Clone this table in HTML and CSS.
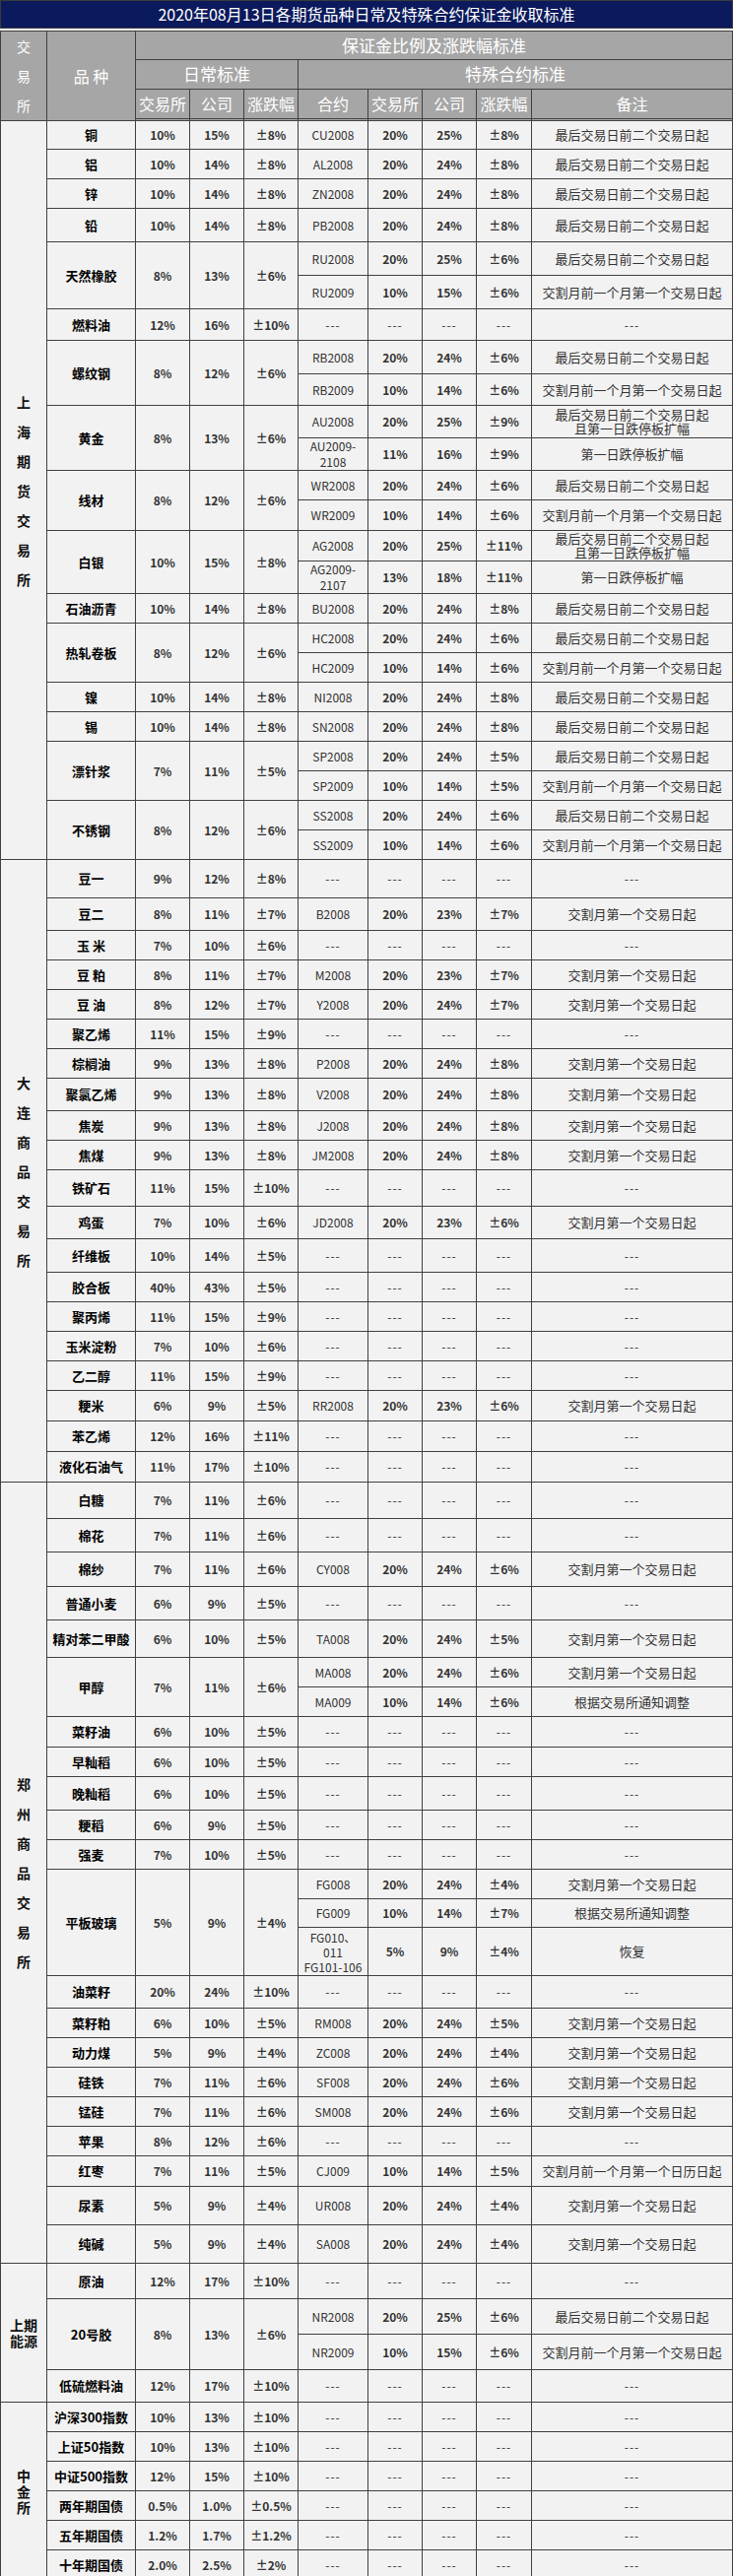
FILE: index.html
```html
<!DOCTYPE html>
<html lang="zh-CN">
<head>
<meta charset="utf-8">
<title>保证金收取标准</title>
<link rel="stylesheet" href="styles.css">
</head>
<body>
<div class="title">2020年08月13日各期货品种日常及特殊合约保证金收取标准</div>
<table class="grid">
<colgroup>
<col class="w47"><col class="w90"><col class="w55"><col class="w55"><col class="w55"><col class="w71"><col class="w55"><col class="w55"><col class="w56"><col class="w204">
</colgroup>
<thead>
<tr class="h29"><th rowspan="3" class="hx">交<br>易<br>所</th><th rowspan="3" class="hp">品 种</th><th colspan="8" class="hb">保证金比例及涨跌幅标准</th></tr>
<tr class="h29"><th colspan="3" class="hb">日常标准</th><th colspan="5" class="hb">特殊合约标准</th></tr>
<tr class="h32 hl"><th>交易所</th><th>公司</th><th>涨跌幅</th><th>合约</th><th>交易所</th><th>公司</th><th>涨跌幅</th><th>备注</th></tr>
</thead>
<tbody>
<!-- 上海期货交易所 -->
<tr class="h29"><td rowspan="24" class="ex">上<br>海<br>期<br>货<br>交<br>易<br>所</td><td class="nm">铜</td><td>10%</td><td>15%</td><td>±8%</td><td class="cd">CU2008</td><td>20%</td><td>25%</td><td>±8%</td><td class="rm">最后交易日前二个交易日起</td></tr>
<tr class="h30"><td class="nm">铝</td><td>10%</td><td>14%</td><td>±8%</td><td class="cd">AL2008</td><td>20%</td><td>24%</td><td>±8%</td><td class="rm">最后交易日前二个交易日起</td></tr>
<tr class="h30"><td class="nm">锌</td><td>10%</td><td>14%</td><td>±8%</td><td class="cd">ZN2008</td><td>20%</td><td>24%</td><td>±8%</td><td class="rm">最后交易日前二个交易日起</td></tr>
<tr class="h34"><td class="nm">铅</td><td>10%</td><td>14%</td><td>±8%</td><td class="cd">PB2008</td><td>20%</td><td>24%</td><td>±8%</td><td class="rm">最后交易日前二个交易日起</td></tr>
<tr class="h34"><td rowspan="2" class="nm">天然橡胶</td><td rowspan="2">8%</td><td rowspan="2">13%</td><td rowspan="2">±6%</td><td class="cd">RU2008</td><td>20%</td><td>25%</td><td>±6%</td><td class="rm">最后交易日前二个交易日起</td></tr>
<tr class="h34"><td class="cd">RU2009</td><td>10%</td><td>15%</td><td>±6%</td><td class="rm">交割月前一个月第一个交易日起</td></tr>
<tr class="h32"><td class="nm">燃料油</td><td>12%</td><td>16%</td><td>±10%</td><td class="na">---</td><td class="na">---</td><td class="na">---</td><td class="na">---</td><td class="na">---</td></tr>
<tr class="h34"><td rowspan="2" class="nm">螺纹钢</td><td rowspan="2">8%</td><td rowspan="2">12%</td><td rowspan="2">±6%</td><td class="cd">RB2008</td><td>20%</td><td>24%</td><td>±6%</td><td class="rm">最后交易日前二个交易日起</td></tr>
<tr class="h32"><td class="cd">RB2009</td><td>10%</td><td>14%</td><td>±6%</td><td class="rm">交割月前一个月第一个交易日起</td></tr>
<tr class="h33"><td rowspan="2" class="nm">黄金</td><td rowspan="2">8%</td><td rowspan="2">13%</td><td rowspan="2">±6%</td><td class="cd">AU2008</td><td>20%</td><td>25%</td><td>±9%</td><td class="rm two">最后交易日前二个交易日起<br>且第一日跌停板扩幅</td></tr>
<tr class="h33"><td class="cd two">AU2009-<br>2108</td><td>11%</td><td>16%</td><td>±9%</td><td class="rm">第一日跌停板扩幅</td></tr>
<tr class="h30"><td rowspan="2" class="nm">线材</td><td rowspan="2">8%</td><td rowspan="2">12%</td><td rowspan="2">±6%</td><td class="cd">WR2008</td><td>20%</td><td>24%</td><td>±6%</td><td class="rm">最后交易日前二个交易日起</td></tr>
<tr class="h31"><td class="cd">WR2009</td><td>10%</td><td>14%</td><td>±6%</td><td class="rm">交割月前一个月第一个交易日起</td></tr>
<tr class="h31"><td rowspan="2" class="nm">白银</td><td rowspan="2">10%</td><td rowspan="2">15%</td><td rowspan="2">±8%</td><td class="cd">AG2008</td><td>20%</td><td>25%</td><td>±11%</td><td class="rm two">最后交易日前二个交易日起<br>且第一日跌停板扩幅</td></tr>
<tr class="h30"><td class="cd two">AG2009-<br>2107</td><td>13%</td><td>18%</td><td>±11%</td><td class="rm">第一日跌停板扩幅</td></tr>
<tr class="h30"><td class="nm">石油沥青</td><td>10%</td><td>14%</td><td>±8%</td><td class="cd">BU2008</td><td>20%</td><td>24%</td><td>±8%</td><td class="rm">最后交易日前二个交易日起</td></tr>
<tr class="h30"><td rowspan="2" class="nm">热轧卷板</td><td rowspan="2">8%</td><td rowspan="2">12%</td><td rowspan="2">±6%</td><td class="cd">HC2008</td><td>20%</td><td>24%</td><td>±6%</td><td class="rm">最后交易日前二个交易日起</td></tr>
<tr class="h30"><td class="cd">HC2009</td><td>10%</td><td>14%</td><td>±6%</td><td class="rm">交割月前一个月第一个交易日起</td></tr>
<tr class="h30"><td class="nm">镍</td><td>10%</td><td>14%</td><td>±8%</td><td class="cd">NI2008</td><td>20%</td><td>24%</td><td>±8%</td><td class="rm">最后交易日前二个交易日起</td></tr>
<tr class="h30"><td class="nm">锡</td><td>10%</td><td>14%</td><td>±8%</td><td class="cd">SN2008</td><td>20%</td><td>24%</td><td>±8%</td><td class="rm">最后交易日前二个交易日起</td></tr>
<tr class="h30"><td rowspan="2" class="nm">漂针浆</td><td rowspan="2">7%</td><td rowspan="2">11%</td><td rowspan="2">±5%</td><td class="cd">SP2008</td><td>20%</td><td>24%</td><td>±5%</td><td class="rm">最后交易日前二个交易日起</td></tr>
<tr class="h30"><td class="cd">SP2009</td><td>10%</td><td>14%</td><td>±5%</td><td class="rm">交割月前一个月第一个交易日起</td></tr>
<tr class="h30"><td rowspan="2" class="nm">不锈钢</td><td rowspan="2">8%</td><td rowspan="2">12%</td><td rowspan="2">±6%</td><td class="cd">SS2008</td><td>20%</td><td>24%</td><td>±6%</td><td class="rm">最后交易日前二个交易日起</td></tr>
<tr class="h30"><td class="cd">SS2009</td><td>10%</td><td>14%</td><td>±6%</td><td class="rm">交割月前一个月第一个交易日起</td></tr>
<!-- 大连商品交易所 -->
<tr class="h39"><td rowspan="20" class="ex">大<br>连<br>商<br>品<br>交<br>易<br>所</td><td class="nm">豆一</td><td>9%</td><td>12%</td><td>±8%</td><td class="na">---</td><td class="na">---</td><td class="na">---</td><td class="na">---</td><td class="na">---</td></tr>
<tr class="h33"><td class="nm">豆二</td><td>8%</td><td>11%</td><td>±7%</td><td class="cd">B2008</td><td>20%</td><td>23%</td><td>±7%</td><td class="rm">交割月第一个交易日起</td></tr>
<tr class="h30"><td class="nm">玉 米</td><td>7%</td><td>10%</td><td>±6%</td><td class="na">---</td><td class="na">---</td><td class="na">---</td><td class="na">---</td><td class="na">---</td></tr>
<tr class="h30"><td class="nm">豆 粕</td><td>8%</td><td>11%</td><td>±7%</td><td class="cd">M2008</td><td>20%</td><td>23%</td><td>±7%</td><td class="rm">交割月第一个交易日起</td></tr>
<tr class="h30"><td class="nm">豆 油</td><td>8%</td><td>12%</td><td>±7%</td><td class="cd">Y2008</td><td>20%</td><td>24%</td><td>±7%</td><td class="rm">交割月第一个交易日起</td></tr>
<tr class="h30"><td class="nm">聚乙烯</td><td>11%</td><td>15%</td><td>±9%</td><td class="na">---</td><td class="na">---</td><td class="na">---</td><td class="na">---</td><td class="na">---</td></tr>
<tr class="h30"><td class="nm">棕榈油</td><td>9%</td><td>13%</td><td>±8%</td><td class="cd">P2008</td><td>20%</td><td>24%</td><td>±8%</td><td class="rm">交割月第一个交易日起</td></tr>
<tr class="h33"><td class="nm">聚氯乙烯</td><td>9%</td><td>13%</td><td>±8%</td><td class="cd">V2008</td><td>20%</td><td>24%</td><td>±8%</td><td class="rm">交割月第一个交易日起</td></tr>
<tr class="h30"><td class="nm">焦炭</td><td>9%</td><td>13%</td><td>±8%</td><td class="cd">J2008</td><td>20%</td><td>24%</td><td>±8%</td><td class="rm">交割月第一个交易日起</td></tr>
<tr class="h30"><td class="nm">焦煤</td><td>9%</td><td>13%</td><td>±8%</td><td class="cd">JM2008</td><td>20%</td><td>24%</td><td>±8%</td><td class="rm">交割月第一个交易日起</td></tr>
<tr class="h37"><td class="nm">铁矿石</td><td>11%</td><td>15%</td><td>±10%</td><td class="na">---</td><td class="na">---</td><td class="na">---</td><td class="na">---</td><td class="na">---</td></tr>
<tr class="h33"><td class="nm">鸡蛋</td><td>7%</td><td>10%</td><td>±6%</td><td class="cd">JD2008</td><td>20%</td><td>23%</td><td>±6%</td><td class="rm">交割月第一个交易日起</td></tr>
<tr class="h34"><td class="nm">纤维板</td><td>10%</td><td>14%</td><td>±5%</td><td class="na">---</td><td class="na">---</td><td class="na">---</td><td class="na">---</td><td class="na">---</td></tr>
<tr class="h30"><td class="nm">胶合板</td><td>40%</td><td>43%</td><td>±5%</td><td class="na">---</td><td class="na">---</td><td class="na">---</td><td class="na">---</td><td class="na">---</td></tr>
<tr class="h30"><td class="nm">聚丙烯</td><td>11%</td><td>15%</td><td>±9%</td><td class="na">---</td><td class="na">---</td><td class="na">---</td><td class="na">---</td><td class="na">---</td></tr>
<tr class="h30"><td class="nm">玉米淀粉</td><td>7%</td><td>10%</td><td>±6%</td><td class="na">---</td><td class="na">---</td><td class="na">---</td><td class="na">---</td><td class="na">---</td></tr>
<tr class="h30"><td class="nm">乙二醇</td><td>11%</td><td>15%</td><td>±9%</td><td class="na">---</td><td class="na">---</td><td class="na">---</td><td class="na">---</td><td class="na">---</td></tr>
<tr class="h31"><td class="nm">粳米</td><td>6%</td><td>9%</td><td>±5%</td><td class="cd">RR2008</td><td>20%</td><td>23%</td><td>±6%</td><td class="rm">交割月第一个交易日起</td></tr>
<tr class="h31"><td class="nm">苯乙烯</td><td>12%</td><td>16%</td><td>±11%</td><td class="na">---</td><td class="na">---</td><td class="na">---</td><td class="na">---</td><td class="na">---</td></tr>
<tr class="h31"><td class="nm">液化石油气</td><td>11%</td><td>17%</td><td>±10%</td><td class="na">---</td><td class="na">---</td><td class="na">---</td><td class="na">---</td><td class="na">---</td></tr>
<!-- 郑州商品交易所 -->
<tr class="h37"><td rowspan="24" class="ex">郑<br>州<br>商<br>品<br>交<br>易<br>所</td><td class="nm">白糖</td><td>7%</td><td>11%</td><td>±6%</td><td class="na">---</td><td class="na">---</td><td class="na">---</td><td class="na">---</td><td class="na">---</td></tr>
<tr class="h34"><td class="nm">棉花</td><td>7%</td><td>11%</td><td>±6%</td><td class="na">---</td><td class="na">---</td><td class="na">---</td><td class="na">---</td><td class="na">---</td></tr>
<tr class="h35"><td class="nm">棉纱</td><td>7%</td><td>11%</td><td>±6%</td><td class="cd">CY008</td><td>20%</td><td>24%</td><td>±6%</td><td class="rm">交割月第一个交易日起</td></tr>
<tr class="h34"><td class="nm">普通小麦</td><td>6%</td><td>9%</td><td>±5%</td><td class="na">---</td><td class="na">---</td><td class="na">---</td><td class="na">---</td><td class="na">---</td></tr>
<tr class="h38"><td class="nm">精对苯二甲酸</td><td>6%</td><td>10%</td><td>±5%</td><td class="cd">TA008</td><td>20%</td><td>24%</td><td>±5%</td><td class="rm">交割月第一个交易日起</td></tr>
<tr class="h30"><td rowspan="2" class="nm">甲醇</td><td rowspan="2">7%</td><td rowspan="2">11%</td><td rowspan="2">±6%</td><td class="cd">MA008</td><td>20%</td><td>24%</td><td>±6%</td><td class="rm">交割月第一个交易日起</td></tr>
<tr class="h30"><td class="cd">MA009</td><td>10%</td><td>14%</td><td>±6%</td><td class="rm">根据交易所通知调整</td></tr>
<tr class="h31"><td class="nm">菜籽油</td><td>6%</td><td>10%</td><td>±5%</td><td class="na">---</td><td class="na">---</td><td class="na">---</td><td class="na">---</td><td class="na">---</td></tr>
<tr class="h30"><td class="nm">早籼稻</td><td>6%</td><td>10%</td><td>±5%</td><td class="na">---</td><td class="na">---</td><td class="na">---</td><td class="na">---</td><td class="na">---</td></tr>
<tr class="h34"><td class="nm">晚籼稻</td><td>6%</td><td>10%</td><td>±5%</td><td class="na">---</td><td class="na">---</td><td class="na">---</td><td class="na">---</td><td class="na">---</td></tr>
<tr class="h30"><td class="nm">粳稻</td><td>6%</td><td>9%</td><td>±5%</td><td class="na">---</td><td class="na">---</td><td class="na">---</td><td class="na">---</td><td class="na">---</td></tr>
<tr class="h30"><td class="nm">强麦</td><td>7%</td><td>10%</td><td>±5%</td><td class="na">---</td><td class="na">---</td><td class="na">---</td><td class="na">---</td><td class="na">---</td></tr>
<tr class="h30"><td rowspan="3" class="nm">平板玻璃</td><td rowspan="3">5%</td><td rowspan="3">9%</td><td rowspan="3">±4%</td><td class="cd">FG008</td><td>20%</td><td>24%</td><td>±4%</td><td class="rm">交割月第一个交易日起</td></tr>
<tr class="h29"><td class="cd">FG009</td><td>10%</td><td>14%</td><td>±7%</td><td class="rm">根据交易所通知调整</td></tr>
<tr class="h49"><td class="cd three">FG010、<br>011<br>FG101-106</td><td>5%</td><td>9%</td><td>±4%</td><td class="rm">恢复</td></tr>
<tr class="h33"><td class="nm">油菜籽</td><td>20%</td><td>24%</td><td>±10%</td><td class="na">---</td><td class="na">---</td><td class="na">---</td><td class="na">---</td><td class="na">---</td></tr>
<tr class="h30"><td class="nm">菜籽粕</td><td>6%</td><td>10%</td><td>±5%</td><td class="cd">RM008</td><td>20%</td><td>24%</td><td>±5%</td><td class="rm">交割月第一个交易日起</td></tr>
<tr class="h30"><td class="nm">动力煤</td><td>5%</td><td>9%</td><td>±4%</td><td class="cd">ZC008</td><td>20%</td><td>24%</td><td>±4%</td><td class="rm">交割月第一个交易日起</td></tr>
<tr class="h30"><td class="nm">硅铁</td><td>7%</td><td>11%</td><td>±6%</td><td class="cd">SF008</td><td>20%</td><td>24%</td><td>±6%</td><td class="rm">交割月第一个交易日起</td></tr>
<tr class="h30"><td class="nm">锰硅</td><td>7%</td><td>11%</td><td>±6%</td><td class="cd">SM008</td><td>20%</td><td>24%</td><td>±6%</td><td class="rm">交割月第一个交易日起</td></tr>
<tr class="h30"><td class="nm">苹果</td><td>8%</td><td>12%</td><td>±6%</td><td class="na">---</td><td class="na">---</td><td class="na">---</td><td class="na">---</td><td class="na">---</td></tr>
<tr class="h31"><td class="nm">红枣</td><td>7%</td><td>11%</td><td>±5%</td><td class="cd">CJ009</td><td>10%</td><td>14%</td><td>±5%</td><td class="rm">交割月前一个月第一个日历日起</td></tr>
<tr class="h39"><td class="nm">尿素</td><td>5%</td><td>9%</td><td>±4%</td><td class="cd">UR008</td><td>20%</td><td>24%</td><td>±4%</td><td class="rm">交割月第一个交易日起</td></tr>
<tr class="h39"><td class="nm">纯碱</td><td>5%</td><td>9%</td><td>±4%</td><td class="cd">SA008</td><td>20%</td><td>24%</td><td>±4%</td><td class="rm">交割月第一个交易日起</td></tr>
<!-- 上期能源 -->
<tr class="h36"><td rowspan="4" class="ex small">上期<br>能源</td><td class="nm">原油</td><td>12%</td><td>17%</td><td>±10%</td><td class="na">---</td><td class="na">---</td><td class="na">---</td><td class="na">---</td><td class="na">---</td></tr>
<tr class="h36"><td rowspan="2" class="nm">20号胶</td><td rowspan="2">8%</td><td rowspan="2">13%</td><td rowspan="2">±6%</td><td class="cd">NR2008</td><td>20%</td><td>25%</td><td>±6%</td><td class="rm">最后交易日前二个交易日起</td></tr>
<tr class="h36"><td class="cd">NR2009</td><td>10%</td><td>15%</td><td>±6%</td><td class="rm">交割月前一个月第一个交易日起</td></tr>
<tr class="h33"><td class="nm">低硫燃料油</td><td>12%</td><td>17%</td><td>±10%</td><td class="na">---</td><td class="na">---</td><td class="na">---</td><td class="na">---</td><td class="na">---</td></tr>
<!-- 中金所 -->
<tr class="h30"><td rowspan="6" class="ex small">中<br>金<br>所</td><td class="nm">沪深300指数</td><td>10%</td><td>13%</td><td>±10%</td><td class="na">---</td><td class="na">---</td><td class="na">---</td><td class="na">---</td><td class="na">---</td></tr>
<tr class="h30"><td class="nm">上证50指数</td><td>10%</td><td>13%</td><td>±10%</td><td class="na">---</td><td class="na">---</td><td class="na">---</td><td class="na">---</td><td class="na">---</td></tr>
<tr class="h30"><td class="nm">中证500指数</td><td>12%</td><td>15%</td><td>±10%</td><td class="na">---</td><td class="na">---</td><td class="na">---</td><td class="na">---</td><td class="na">---</td></tr>
<tr class="h30"><td class="nm">两年期国债</td><td>0.5%</td><td>1.0%</td><td>±0.5%</td><td class="na">---</td><td class="na">---</td><td class="na">---</td><td class="na">---</td><td class="na">---</td></tr>
<tr class="h30"><td class="nm">五年期国债</td><td>1.2%</td><td>1.7%</td><td>±1.2%</td><td class="na">---</td><td class="na">---</td><td class="na">---</td><td class="na">---</td><td class="na">---</td></tr>
<tr class="h30"><td class="nm">十年期国债</td><td>2.0%</td><td>2.5%</td><td>±2%</td><td class="na">---</td><td class="na">---</td><td class="na">---</td><td class="na">---</td><td class="na">---</td></tr>
</tbody>
</table>
</body>
</html>
```

FILE: styles.css
```css
html, body {
  margin: 0;
  padding: 0;
  background: #ffffff;
}
body {
  font-family: "Noto Sans CJK SC", "Noto Sans", sans-serif;
  color: #333333;
}
.title {
  box-sizing: border-box;
  width: 744px;
  height: 29px;
  margin-bottom: 2px;
  background: #0b1a5c;
  border: 1px solid #3a3a3a;
  color: #ffffff;
  font-size: 16px;
  line-height: 26px;
  text-align: center;
}
.grid {
  width: 744px;
  table-layout: fixed;
  border-collapse: separate;
  border-spacing: 0;
  border-left: 1px solid #404040;
  border-top: 1px solid #404040;
}
.w47 { width: 47px; }
.w90 { width: 90px; }
.w55 { width: 55px; }
.w56 { width: 56px; }
.w71 { width: 71px; }
.w204 { width: 204px; }

.grid th,
.grid td {
  padding: 0;
  border-right: 1px solid #404040;
  border-bottom: 1px solid #404040;
  text-align: center;
  vertical-align: middle;
  white-space: nowrap;
}
.grid th {
  background: #a6a6a6;
  color: #ffffff;
  font-weight: normal;
  font-size: 16px;
  line-height: 20px;
}
.grid th.hx {
  font-size: 14px;
  line-height: 30px;
}
.grid th.hp {
  font-size: 16px;
}
.grid th.hb {
  font-size: 17px;
}
.grid tr.hl th {
  border-bottom: 3px double #404040;
}
.grid td {
  background: #f2f2f2;
  color: #333333;
  font-size: 12px;
  font-weight: bold;
  line-height: 16px;
}
.grid td.ex {
  color: #111111;
  font-size: 14px;
  line-height: 30px;
}
.grid td.ex.small {
  font-size: 14px;
  line-height: 16px;
}
.grid td.nm {
  color: #000000;
  font-size: 13px;
}
.grid td.cd {
  font-weight: normal;
  color: #333333;
}
.grid td.rm {
  font-weight: normal;
  font-size: 13px;
  color: #333333;
}
.grid td.rm.two {
  line-height: 14px;
}
.grid td.cd.three {
  line-height: 15px;
}
.grid td.na {
  font-weight: normal;
  letter-spacing: 1px;
}

.h29 { height: 29px; }
.h30 { height: 30px; }
.h31 { height: 31px; }
.h32 { height: 32px; }
.h33 { height: 33px; }
.h34 { height: 34px; }
.h35 { height: 35px; }
.h36 { height: 36px; }
.h37 { height: 37px; }
.h38 { height: 38px; }
.h39 { height: 39px; }
.h49 { height: 49px; }
```
